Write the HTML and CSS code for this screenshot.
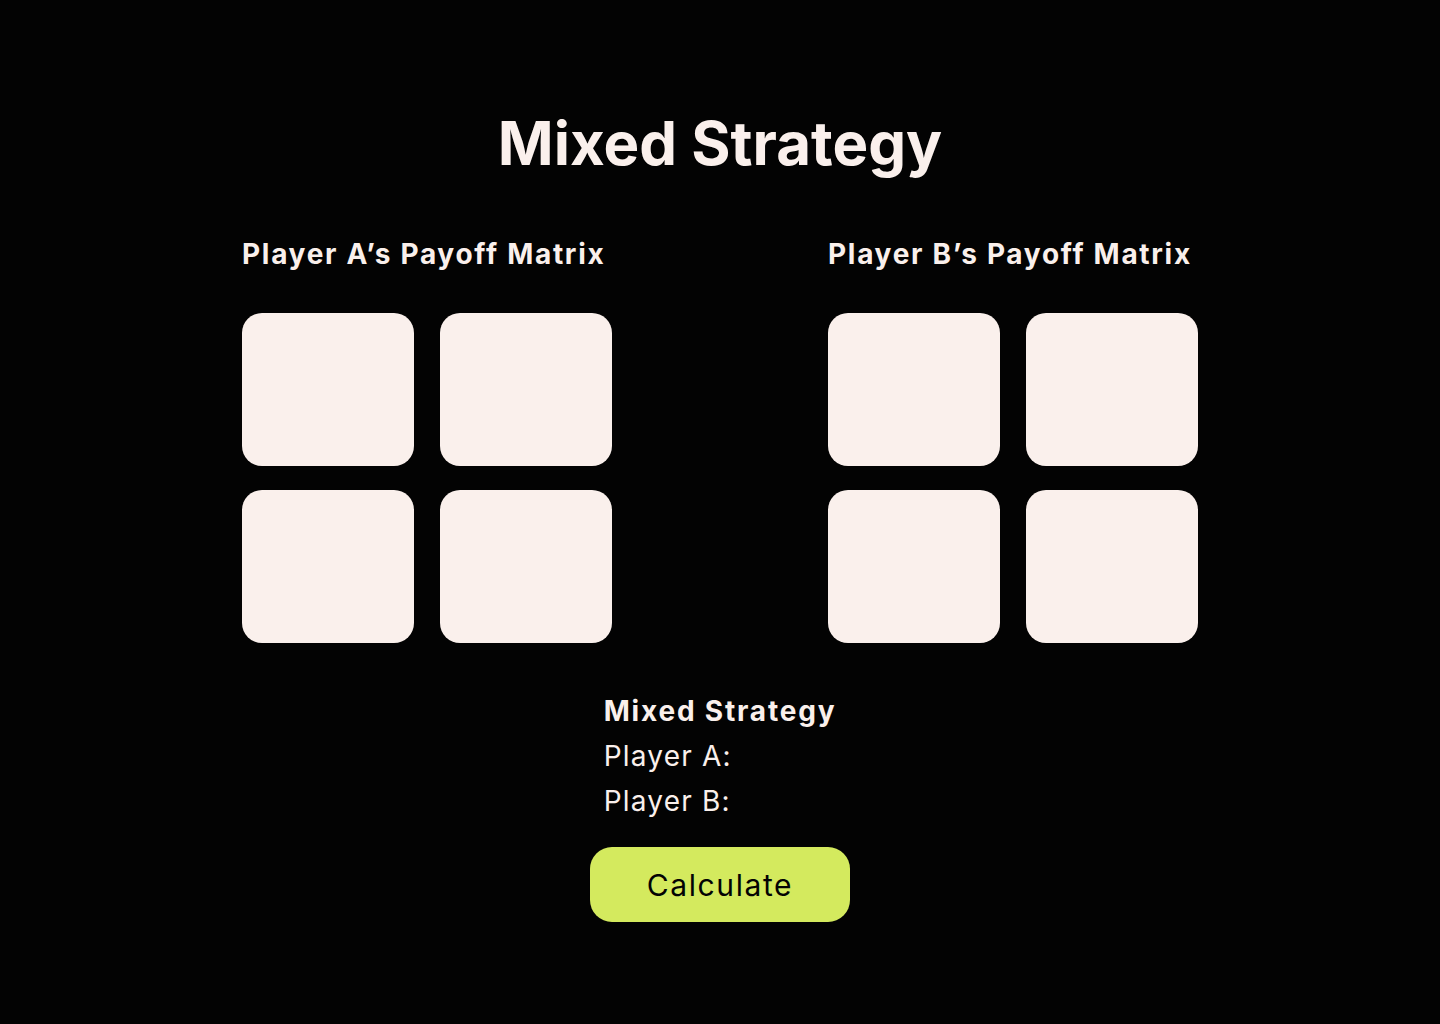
FILE: index.html
```html
<!DOCTYPE html>
<html>
<head>
    <title>Mixed Strategy</title>
    <link rel="stylesheet" href="styles.css">
</head>
<body>
    <h1>Mixed Strategy</h1>
    <div class="matrices">
        <!-- Player A -->
        <div class="matrix">
            <h2>Player A’s Payoff Matrix</h2>
            <div class="grid">
                <input type="text" class="cell">
                <input type="text" class="cell">
                <input type="text" class="cell">
                <input type="text" class="cell">
            </div>
        </div>
        <!-- Player B -->
        <div class="matrix">
            <h2>Player B’s Payoff Matrix</h2>
            <div class="grid">
                <input type="text" class="cell">
                <input type="text" class="cell">
                <input type="text" class="cell">
                <input type="text" class="cell">
            </div>
        </div>
    </div>

    <div class="result">
        <h3>Mixed Strategy</h3>
        <p>Player A: <span id="player-a"></span></p>
        <p>Player B: <span id="player-b"></span></p>
    </div>

    <button class="calc-btn">Calculate</button>
</body>
</html>
```

FILE: styles.css
```css
body {
    margin: 0;
    background-color: #030303;
    color: #faf0ec;
    font-family: Inter, "Open Sans", sans-serif;
    display: flex;
    flex-direction: column;
    align-items: center;
    height: 100vh;
    box-sizing: border-box;
    padding-top: 105px;
}
h1 {
    margin: 0;
    font-size: 60px;
    font-weight: 700;
    line-height: 76px;
}
/* Matrices */
.matrices {
    display: flex;
    gap: 216px;
    margin-top: 53px;
}
.matrix h2 {
    margin: 0;
    font-size: 28px;
    font-weight: 700;
    line-height: 40px;
    letter-spacing: 1.7px;
}
.grid {
    display: grid;
    grid-template-columns: 172px 172px;
    grid-auto-rows: 153px;
    column-gap: 26px;
    row-gap: 24px;
    margin-top: 39px;
}
.cell {
    border: none;
    outline: none;
    border-radius: 20px;
    background-color: #faf0ec;
    padding: 0;
    width: 100%;
    height: 100%;
}
/* Result */
.result {
    margin-top: 48px;
}
.result h3 {
    margin: 0;
    font-size: 28px;
    font-weight: 700;
    line-height: 40px;
    letter-spacing: 1.8px;
}
.result p {
    margin: 5px 0 0;
    font-size: 28px;
    line-height: 40px;
    letter-spacing: 1.2px;
}
.calc-btn {
    margin-top: 26px;
    width: 260px;
    height: 75px;
    border: none;
    border-radius: 22px;
    background-color: #d4ea5e;
    color: #030303;
    font-family: Inter, "Open Sans", sans-serif;
    font-size: 30px;
    letter-spacing: 1.6px;
    cursor: pointer;
}
```
